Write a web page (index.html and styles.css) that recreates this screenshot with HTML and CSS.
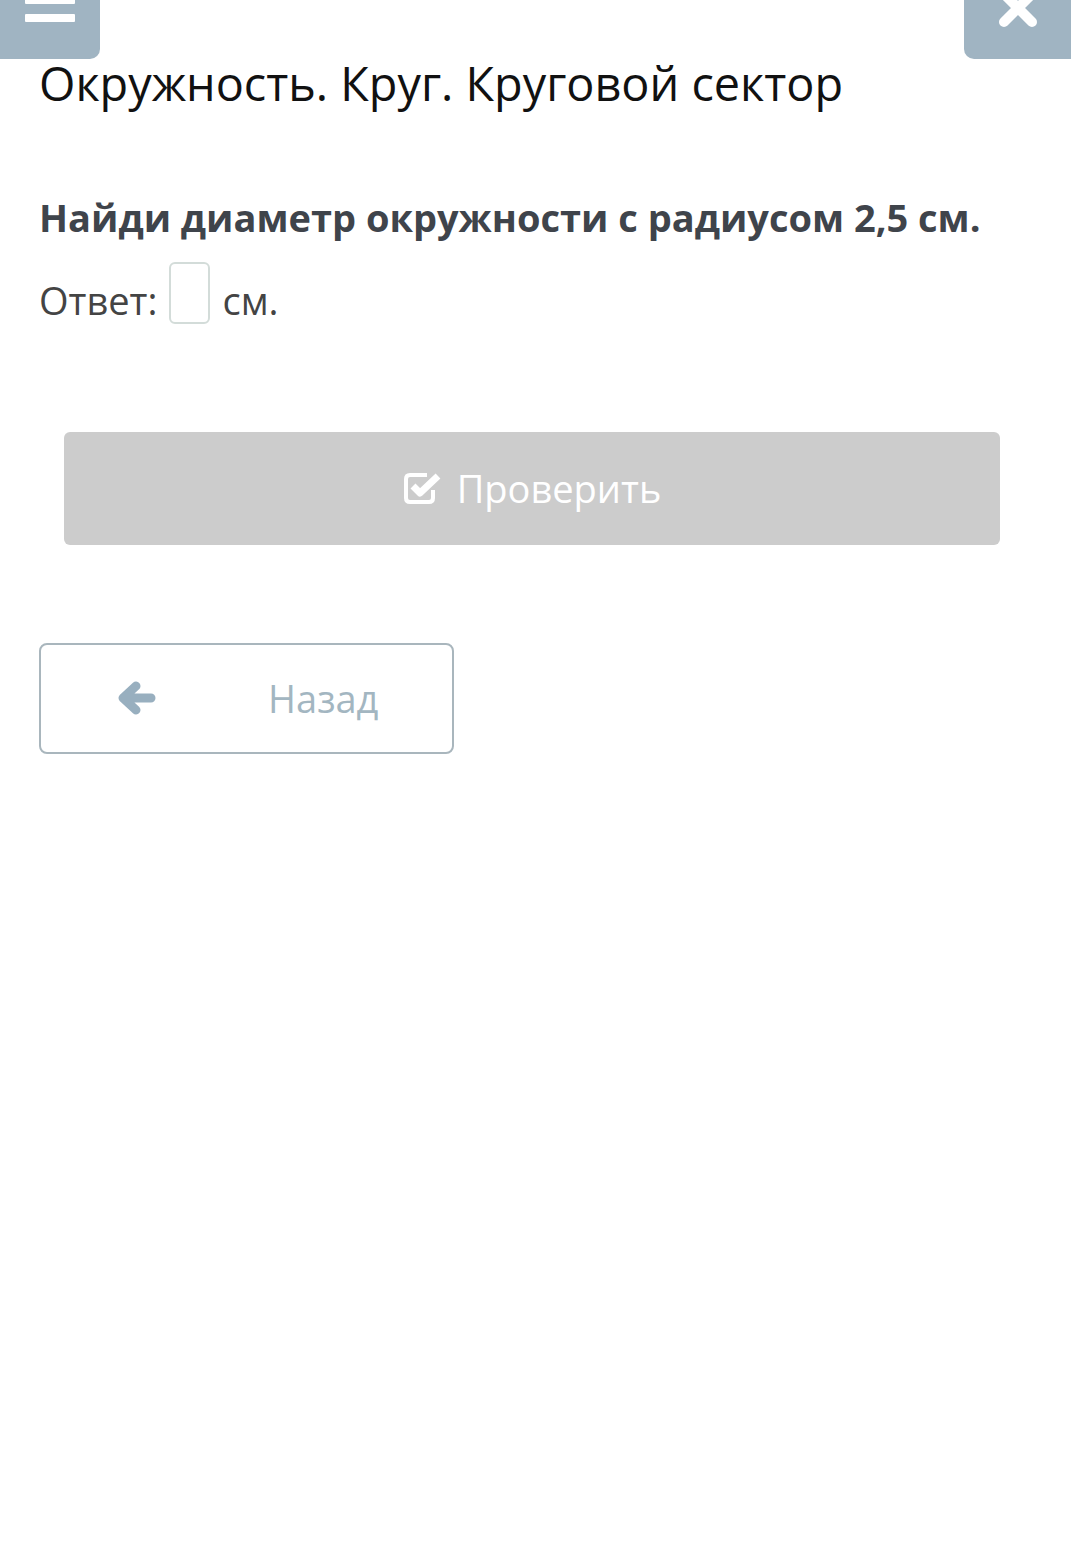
FILE: index.html
```html
<!DOCTYPE html>
<html lang="ru">
<head>
    <meta charset="UTF-8">
    <meta name="viewport" content="width=device-width, initial-scale=1.0">
    <title>Окружность. Круг. Круговой сектор</title>
    <link rel="stylesheet" href="styles.css">
</head>
<body>
    <div class="topbar">
        <button class="top-btn menu-btn" aria-label="Меню">
            <svg width="50" height="24" viewBox="0 0 50 24">
                <rect x="0" y="-4" width="50" height="8" rx="1" fill="#fff"/>
                <rect x="0" y="14" width="50" height="8" rx="1" fill="#fff"/>
            </svg>
        </button>
        <button class="top-btn close-btn" aria-label="Закрыть">
            <svg width="44" height="30" viewBox="0 0 44 30">
                <path d="M8 -6 L36 22 M36 -6 L8 22" stroke="#fff" stroke-width="10" stroke-linecap="round"/>
            </svg>
        </button>
    </div>

    <div class="content">
        <h1 class="title">Окружность. Круг. Круговой сектор</h1>
        <p class="question">Найди диаметр окружности с радиусом 2,5 см.</p>
        <div class="answer">
            <span>Ответ:</span>
            <input type="text" class="answer-input">
            <span>см.</span>
        </div>

        <button class="check-btn" disabled>
            <svg width="40" height="36" viewBox="0 0 40 36">
                <path d="M30 20 V28 Q30 32 26 32 H7 Q3 32 3 28 V9 Q3 5 7 5 H24" fill="none" stroke="#fff" stroke-width="4"/>
                <path d="M10 16 L17 23 L35 6" fill="none" stroke="#fff" stroke-width="7" stroke-linejoin="round"/>
            </svg>
            Проверить
        </button>

        <button class="back-btn">
            <svg width="40" height="34" viewBox="0 0 40 34">
                <path d="M34 17 H8 M19 5 L6 17 L19 29" fill="none" stroke="#98afbf" stroke-width="9" stroke-linecap="round" stroke-linejoin="round"/>
            </svg>
            <span>Назад</span>
        </button>
    </div>
</body>
</html>
```

FILE: styles.css
```css
:root{
    --top-btn: #a0b4c2;
    --text-dark: #3f444b;
    --check-bg: #cccccc;
    --back-border: #a9b6bd;
    --back-text: #a3b6c1;
}
body {
    margin: 0;
    background: #fff;
    font-family: "Open Sans", sans-serif;
    color: var(--text-dark);
}

.topbar {
    display: flex;
    justify-content: space-between;
    height: 59px;
}

.top-btn {
    border: none;
    padding: 0;
    background-color: var(--top-btn);
    display: flex;
    justify-content: center;
    align-items: flex-start;
}

.menu-btn {
    width: 100px;
    border-radius: 0 0 10px 0;
}

.close-btn {
    width: 107px;
    border-radius: 0 0 0 10px;
}

.content {
    padding: 0 39px;
}

.title {
    margin: -4px 0 0;
    font-size: 46.8px;
    font-weight: 400;
    line-height: 1.2;
    color: #111;
}

.question {
    margin: 84px 0 0;
    font-size: 38px;
    font-weight: 700;
    line-height: 1.2;
}

.answer {
    display: flex;
    align-items: flex-end;
    gap: 12px;
    margin-top: 21px;
    font-size: 38px;
    line-height: 1.2;
    color: #444;
}

.answer-input {
    width: 37px;
    height: 58px;
    padding: 0;
    border: 2px solid #d3dcd9;
    border-radius: 6px;
    box-sizing: content-box;
}

.check-btn {
    display: flex;
    justify-content: center;
    align-items: center;
    gap: 14px;
    width: 936px;
    height: 113px;
    margin: 108px 0 0 25px;
    border: none;
    border-radius: 6px;
    background-color: var(--check-bg);
    color: #fff;
    font-family: "Open Sans", sans-serif;
    font-size: 38px;
}

.back-btn {
    display: flex;
    align-items: center;
    width: 415px;
    height: 111px;
    margin-top: 98px;
    padding: 0 0 0 76px;
    border: 2px solid var(--back-border);
    border-radius: 8px;
    background: #fff;
    color: var(--back-text);
    font-family: "Open Sans", sans-serif;
    font-size: 38px;
    box-sizing: border-box;
}

.back-btn span {
    margin-left: 111px;
}
```
